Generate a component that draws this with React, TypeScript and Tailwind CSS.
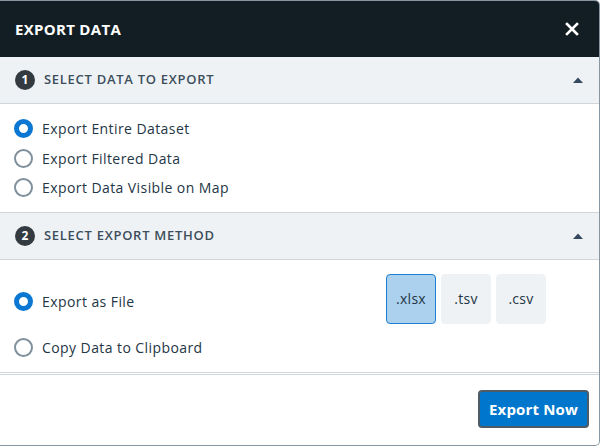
import { useState } from 'react';

const dataOptions = ['Export Entire Dataset', 'Export Filtered Data', 'Export Data Visible on Map'];
const formats = ['.xlsx', '.tsv', '.csv'];

function Radio({ checked }: { checked: boolean }) {
  return checked ? (
    <span className="block w-[19px] h-[19px] rounded-full border-[5.5px] border-[#0a78d2] bg-white shrink-0" />
  ) : (
    <span className="block w-[19px] h-[19px] rounded-full border-2 border-[#7f909c] bg-white shrink-0" />
  );
}

function SectionHeader({ num, title }: { num: number; title: string }) {
  return (
    <div className="h-[46px] bg-[#eef2f5] flex items-center pl-[15px] pr-[16px]">
      <span className="w-[20px] h-[20px] rounded-full bg-[#333b41] text-white text-[12px] font-bold flex items-center justify-center">
        {num}
      </span>
      <span className="ml-[9px] text-[13px] font-semibold tracking-[0.055em] text-[#3d4e5b]">{title}</span>
      <svg className="ml-auto" width="10" height="6" viewBox="0 0 10 6">
        <path d="M0 6 L5 0.5 L10 6 Z" fill="#34495e" />
      </svg>
    </div>
  );
}

export default function App() {
  const [data, setData] = useState(0);
  const [method, setMethod] = useState(0);
  const [format, setFormat] = useState(0);

  return (
    <div className="w-[600px] h-[446px] bg-white border-t border-r border-b border-[#8796a1] rounded-tr-[5px] rounded-br-[5px] overflow-hidden flex flex-col font-['Open_Sans',sans-serif]">
      {/* Header */}
      <div className="h-[56px] bg-[#131e24] flex items-center justify-between pl-[15px] pr-[20px] shrink-0">
        <span className="text-white text-[15px] font-bold tracking-[0.02em]">EXPORT DATA</span>
        <svg width="14" height="14" viewBox="0 0 14 14">
          <path d="M2 2 L12 12 M12 2 L2 12" stroke="#fff" strokeWidth="2.6" strokeLinecap="square" />
        </svg>
      </div>

      <div className="border-b border-[#cfd7dd]">
        <SectionHeader num={1} title="SELECT DATA TO EXPORT" />
      </div>
      <div className="flex flex-col pt-[10px] pb-[9px] px-[14px]">
        {dataOptions.map((label, i) => (
          <label key={label} className="h-[29.5px] flex items-center cursor-pointer" onClick={() => setData(i)}>
            <Radio checked={data === i} />
            <span className="ml-[9px] text-[14px] font-medium tracking-[0.03em] text-[#243645]">{label}</span>
          </label>
        ))}
      </div>

      <div className="border-t border-b border-[#cfd7dd]">
        <SectionHeader num={2} title="SELECT EXPORT METHOD" />
      </div>
      <div className="h-[113px] border-b border-[#cfd7dd] px-[14px] pt-[14px] flex flex-col">
        <div className="h-[50px] flex items-center">
          <label className="flex items-center cursor-pointer pt-[6px]" onClick={() => setMethod(0)}>
            <Radio checked={method === 0} />
            <span className="ml-[9px] text-[14px] font-medium tracking-[0.03em] text-[#243645]">Export as File</span>
          </label>
          <div className="ml-auto mr-[39px] flex gap-[5px]">
            {formats.map((f, i) => (
              <button
                key={f}
                onClick={() => setFormat(i)}
                className={
                  format === i
                    ? 'w-[50px] h-[50px] rounded-[4px] bg-[#acd1ee] border border-[#1f7fd0] text-[14px] font-medium tracking-[0.02em] text-[#243645]'
                    : 'w-[50px] h-[50px] rounded-[4px] bg-[#eef2f5] border border-[#eef2f5] text-[14px] font-medium tracking-[0.02em] text-[#243645]'
                }
              >
                {f}
              </button>
            ))}
          </div>
        </div>
        <label className="h-[52px] flex items-center cursor-pointer" onClick={() => setMethod(1)}>
          <Radio checked={method === 1} />
          <span className="ml-[9px] text-[14px] font-medium tracking-[0.03em] text-[#243645]">Copy Data to Clipboard</span>
        </label>
      </div>

      <div className="mt-px border-t border-[#cfd7dd] flex-1 flex items-center justify-end pr-[10px] pb-[2px]">
        <button className="w-[111px] h-[38px] rounded-[4px] bg-[#0077cc] border-2 border-[#4c5b66] text-white text-[15px] font-bold tracking-[0.01em]">
          Export Now
        </button>
      </div>
    </div>
  );
}
